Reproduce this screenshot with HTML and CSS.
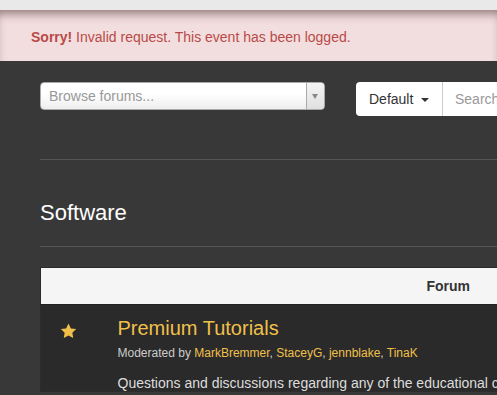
FILE: index.html
```html
<!DOCTYPE html>
<html lang="en">
<head>
  <meta charset="UTF-8" />
  <title>Forums</title>
  <link rel="stylesheet" href="styles.css">
</head>
<body>
<div class="topbar"></div>
<div class="alert"><strong>Sorry!</strong> Invalid request. This event has been logged.</div>

<div class="container">
  <div class="toolbar">
    <div class="browse">
      <span class="browse-text">Browse forums...</span>
      <span class="browse-arrow"></span>
    </div>
    <div class="search-group">
      <div class="btn-default">Default <span class="caret"></span></div>
      <div class="search-input">Search</div>
    </div>
  </div>

  <hr>
  <h2>Software</h2>
  <hr>

  <table class="forums">
    <thead>
      <tr>
        <th class="col-icon"></th>
        <th class="col-forum">Forum</th>
      </tr>
    </thead>
    <tbody>
      <tr>
        <td class="col-icon">
          <svg width="17" height="16" viewBox="0 0 24 23"><path d="M12 0.8l3.4 7 7.6 1-5.5 5.3 1.3 7.6L12 18.1l-6.8 3.6 1.3-7.6L1 8.8l7.6-1z" fill="#f0c04a"/></svg>
        </td>
        <td class="col-forum">
          <a class="title">Premium Tutorials</a>
          <div class="mods">Moderated by <a>MarkBremmer</a>, <a>StaceyG</a>, <a>jennblake</a>, <a>TinaK</a></div>
          <p class="desc">Questions and discussions regarding any of the educational content</p>
        </td>
      </tr>
    </tbody>
  </table>
</div>
</body>
</html>
```

FILE: styles.css
```css
* {
  box-sizing: border-box;
  margin: 0;
  padding: 0;
}

html, body {
  overflow: hidden;
}

body {
  background-color: #383838;
  font-family: 'Liberation Sans', Arial, sans-serif;
  font-size: 14px;
  color: #ddd;
}

.topbar {
  height: 10px;
  background-color: #e9e9e9;
}

.alert {
  height: 51px;
  padding: 19px 0 0 31px;
  background-color: #f2dede;
  color: #b94a48;
  font-size: 14px;
  box-shadow: inset 0 8px 10px -4px rgba(90, 60, 65, 0.6);
}

.container {
  padding: 21px 0 0 40px;
  width: 560px;
}

.toolbar {
  display: flex;
  align-items: flex-start;
  gap: 31px;
}

.browse {
  display: flex;
  flex: none;
  width: 285px;
  height: 28px;
  background: linear-gradient(#fff 40%, #eee);
  border: 1px solid #aaa;
  border-radius: 4px;
}

.browse-text {
  flex: 1;
  padding: 5px 0 0 8px;
  color: #999;
  font-size: 14px;
}

.browse-arrow {
  width: 18px;
  border-left: 1px solid #aaa;
  background: linear-gradient(#f4f4f4, #e0e0e0);
  border-radius: 0 4px 4px 0;
  position: relative;
}

.browse-arrow::after {
  content: "";
  position: absolute;
  left: 5px;
  top: 11px;
  border-left: 3.5px solid transparent;
  border-right: 3.5px solid transparent;
  border-top: 5px solid #888;
}

.search-group {
  display: flex;
  flex: none;
  height: 34px;
}

.btn-default {
  width: 87px;
  padding: 9px 0 0 13px;
  background-color: #fff;
  color: #333;
  font-size: 14px;
  border-radius: 4px 0 0 4px;
  border-right: 1px solid #ccc;
}

.caret {
  display: inline-block;
  margin-left: 4px;
  vertical-align: middle;
  border-left: 4.5px solid transparent;
  border-right: 4.5px solid transparent;
  border-top: 4.5px solid #333;
}

.search-input {
  width: 120px;
  padding: 9px 0 0 12px;
  background-color: #fff;
  color: #999;
}

hr {
  border: none;
  border-top: 1px solid #555;
  margin-top: 43px;
}

h2 {
  font-size: 22px;
  font-weight: normal;
  color: #fff;
  height: 86px;
  padding-top: 40px;
}

h2 + hr {
  margin-top: 0;
}

.forums {
  margin-top: 20px;
  width: 100%;
  border-collapse: collapse;
  border: 1px solid #2c2c2c;
}

.forums th {
  background-color: #f5f5f5;
  color: #333;
  height: 37px;
  font-weight: bold;
  text-align: left;
  border-bottom: 1px solid #222;
}

.forums th.col-forum {
  padding-left: 309px;
}

.forums td {
  background-color: #2a2a2a;
    vertical-align: top;
}

.forums td.col-icon {
  width: 77px;
  padding: 18px 0 0 19px;
}

.forums td.col-forum {
  padding-top: 12px;
}

.title {
  display: block;
  font-size: 20px;
  color: #f0c04a;
}

.mods {
  margin-top: 6px;
  font-size: 12px;
  color: #ccc;
}

.mods a {
  color: #f0c04a;
}

.desc {
  margin-top: 15px;
  white-space: nowrap;
  color: #ddd;
}
```
